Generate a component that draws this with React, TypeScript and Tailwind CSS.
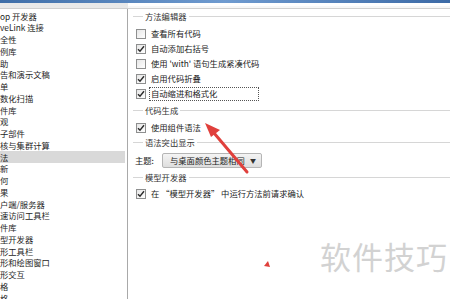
import React from 'react';

const leftItems = [
  'op 开发器',
  'veLink 连接',
  '全性',
  '例库',
  '助',
  '告和演示文稿',
  '单',
  '数化扫描',
  '件库',
  '观',
  '子部件',
  '核与集群计算',
  '法',
  '新',
  '何',
  '果',
  '户端/服务器',
  '速访问工具栏',
  '件库',
  '型开发器',
  '形工具栏',
  '形和绘图窗口',
  '形交互',
  '格',
  '格',
];

const Check: React.FC<{ checked: boolean }> = ({ checked }) => (
  <div className="w-[10px] h-[10px] border border-[#8e8f8f] bg-gradient-to-br from-[#e6e6e6] to-white flex items-center justify-center shrink-0">
    {checked && (
      <svg width="8" height="8" viewBox="0 0 8 8">
        <path d="M1 4.2 L3 6.3 L7 1.3" fill="none" stroke="#2b2b2b" strokeWidth="1.4" />
      </svg>
    )}
  </div>
);

const GroupHeader: React.FC<{ title: string; className?: string }> = ({ title, className }) => (
  <div className={`h-[12px] flex items-center pl-[5px] ${className ?? ''}`}>
    <div className="w-[10px] h-px bg-[#d6d6d6]" />
    <span className="px-[2px] text-[#333] leading-none">{title}</span>
    <div className="flex-1 h-px bg-[#d6d6d6]" />
  </div>
);

const CheckRow: React.FC<{ checked: boolean; label: string; focus?: boolean }> = ({ checked, label, focus }) => (
  <div className="h-[15px] flex items-center pl-[8px] gap-[4px] whitespace-nowrap">
    <Check checked={checked} />
    <span
      className={`leading-none text-[#222] ${focus ? 'outline outline-1 outline-dotted outline-[#555] w-[108px] h-[12px] flex items-center pl-[1px]' : 'pl-[1px]'}`}
    >
      {label}
    </span>
  </div>
);

export default function App() {
  return (
    <div className="relative w-[450px] h-[299px] overflow-hidden bg-white text-[8.3px] font-['Noto_Sans_CJK_SC',sans-serif]">
      <div className="h-[3px] bg-gradient-to-r from-[#3f6ea8] via-[#6f9bd0] to-[#3c6aa6]" />
      <div className="h-[6px] flex">
        <div className="w-[128px] bg-[#e9e9e9] border-b border-[#cfcfcf]" />
        <div className="flex-1 bg-[#f7f7f7] border-t-[3px] border-t-white border-b border-[#d0d0d0]" />
      </div>
      <div className="flex h-[290px]">
        <div className="w-[128px] border-r border-[#a9a9a9] pt-px">
          {leftItems.map((t, i) => (
            <div
              key={i}
              className={`h-[11.75px] flex items-center leading-none text-[#1e1e1e] whitespace-nowrap ${i === 12 ? 'bg-[#d9d9d9] mr-[2px]' : ''}`}
            >
              {t}
            </div>
          ))}
        </div>
        <div className="flex-1 flex flex-col">
          <GroupHeader title="方法编辑器" className="mt-px" />
          <div className="mt-[4px]">
            <CheckRow checked={false} label="查看所有代码" />
            <CheckRow checked label="自动添加右括号" />
            <CheckRow checked={false} label="使用 'with' 语句生成紧凑代码" />
            <CheckRow checked label="启用代码折叠" />
            <CheckRow checked label="自动缩进和格式化" focus />
          </div>
          <GroupHeader title="代码生成" className="mt-[3px]" />
          <div className="mt-[4px]">
            <CheckRow checked label="使用组件语法" />
          </div>
          <GroupHeader title="语法突出显示" className="mt-px" />
          <div className="mt-[5px] h-[15px] flex items-center pl-[7px] whitespace-nowrap">
            <span className="w-[27px] text-[#222] leading-none">主题:</span>
            <div className="w-[100px] h-[15px] border border-[#b5b5b5] rounded-[2px] bg-gradient-to-b from-[#f4f4f4] to-[#dedede] flex items-center pl-[7px] pr-[5px]">
              <span className="flex-1 text-[#222] leading-none">与桌面颜色主题相同</span>
              <span className="text-[6px] text-[#333] leading-none">▼</span>
            </div>
          </div>
          <GroupHeader title="模型开发器" className="mt-[3px]" />
          <div className="mt-[3px]">
            <CheckRow checked label="在 “模型开发器” 中运行方法前请求确认" />
          </div>
        </div>
      </div>

      <div className="absolute left-[320px] top-[240px] text-[31px] leading-none text-[#d2d2d2] tracking-[1px] font-['Noto_Sans_CJK_SC',sans-serif]">
        软件技巧
      </div>

      <svg className="absolute left-0 top-0 pointer-events-none" width="450" height="299">
        <path d="M247 172 L214 133" stroke="#e0403c" strokeWidth="3" strokeLinecap="round" />
        <polygon points="205,123 220,130 211,137" fill="#e0403c" />
        <polygon points="264,266 268,261 270,267" fill="#e0403c" />
      </svg>
    </div>
  );
}
